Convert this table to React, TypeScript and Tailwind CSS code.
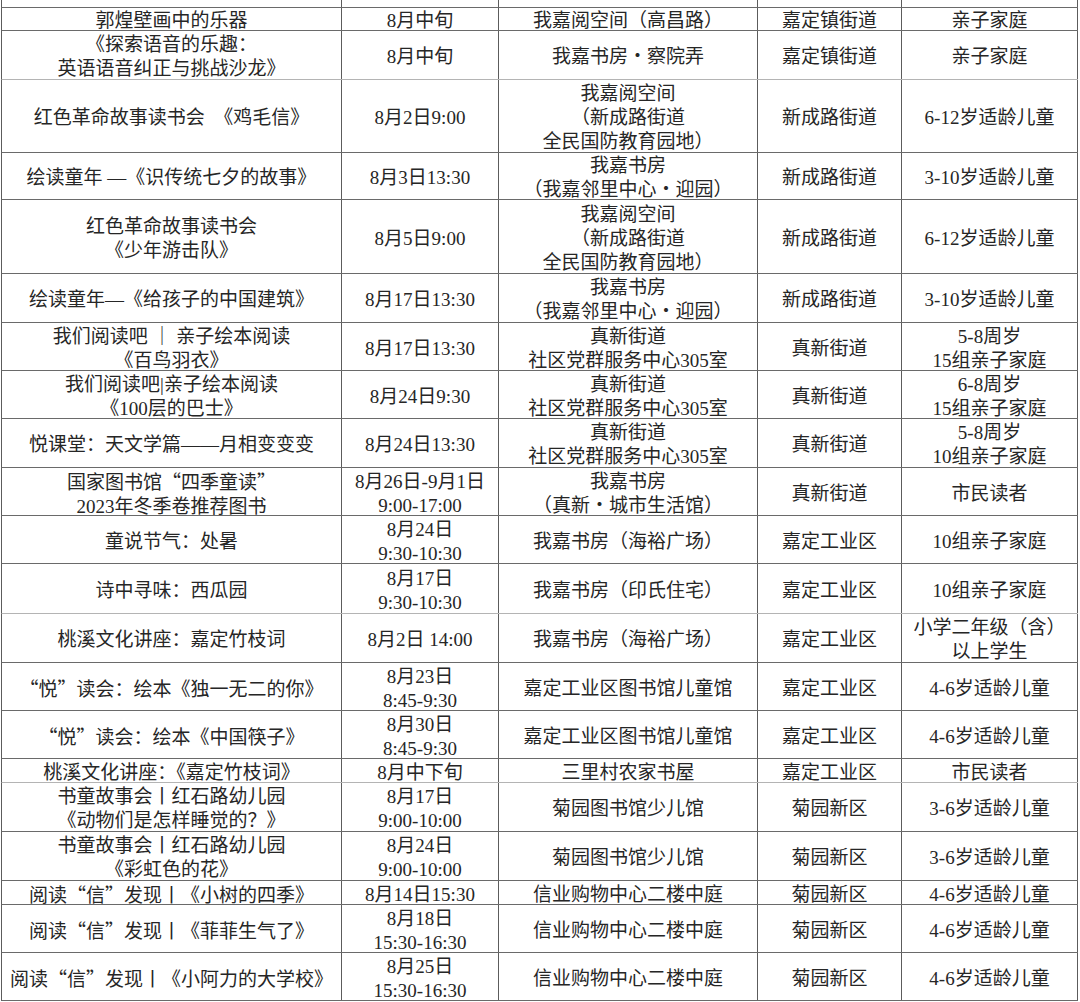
type Row = {
  h: number;
  cells: [string, string, string, string, string];
  light?: boolean;
};

const widths = ["w-[340px]", "w-[157px]", "w-[259px]", "w-[144px]", "w-[176px]"];

const rows: Row[] = [
  { h: 8, cells: ["", "", "", "", ""] },
  { h: 23, cells: ["郭煌壁画中的乐器", "8月中旬", "我嘉阅空间（高昌路）", "嘉定镇街道", "亲子家庭"] },
  {
    h: 49,
    light: true,
    cells: ["《探索语音的乐趣：\n英语语音纠正与挑战沙龙》", "8月中旬", "我嘉书房・察院弄", "嘉定镇街道", "亲子家庭"],
  },
  {
    h: 73,
    cells: ["红色革命故事读书会　《鸡毛信》", "8月2日9:00", "我嘉阅空间\n（新成路街道\n全民国防教育园地）", "新成路街道", "6-12岁适龄儿童"],
  },
  {
    h: 47,
    cells: ["绘读童年 —《识传统七夕的故事》", "8月3日13:30", "我嘉书房\n（我嘉邻里中心・迎园）", "新成路街道", "3-10岁适龄儿童"],
  },
  {
    h: 74,
    cells: ["红色革命故事读书会\n《少年游击队》", "8月5日9:00", "我嘉阅空间\n（新成路街道\n全民国防教育园地）", "新成路街道", "6-12岁适龄儿童"],
  },
  {
    h: 49,
    cells: ["绘读童年—《给孩子的中国建筑》", "8月17日13:30", "我嘉书房\n（我嘉邻里中心・迎园）", "新成路街道", "3-10岁适龄儿童"],
  },
  {
    h: 48,
    cells: ["我们阅读吧 ｜ 亲子绘本阅读\n《百鸟羽衣》", "8月17日13:30", "真新街道\n社区党群服务中心305室", "真新街道", "5-8周岁\n15组亲子家庭"],
  },
  {
    h: 48,
    cells: ["我们阅读吧|亲子绘本阅读\n《100层的巴士》", "8月24日9:30", "真新街道\n社区党群服务中心305室", "真新街道", "6-8周岁\n15组亲子家庭"],
  },
  {
    h: 49,
    cells: ["悦课堂：天文学篇——月相变变变", "8月24日13:30", "真新街道\n社区党群服务中心305室", "真新街道", "5-8周岁\n10组亲子家庭"],
  },
  {
    h: 48,
    cells: ["国家图书馆“四季童读”\n2023年冬季卷推荐图书", "8月26日-9月1日\n9:00-17:00", "我嘉书房\n（真新・城市生活馆）", "真新街道", "市民读者"],
  },
  { h: 48, cells: ["童说节气：处暑", "8月24日\n9:30-10:30", "我嘉书房（海裕广场）", "嘉定工业区", "10组亲子家庭"] },
  {
    h: 50,
    light: true,
    cells: ["诗中寻味：西瓜园", "8月17日\n9:30-10:30", "我嘉书房（印氏住宅）", "嘉定工业区", "10组亲子家庭"],
  },
  {
    h: 49,
    cells: ["桃溪文化讲座：嘉定竹枝词", "8月2日 14:00", "我嘉书房（海裕广场）", "嘉定工业区", "小学二年级（含）\n以上学生"],
  },
  {
    h: 48,
    cells: ["“悦”读会：绘本《独一无二的你》", "8月23日\n8:45-9:30", "嘉定工业区图书馆儿童馆", "嘉定工业区", "4-6岁适龄儿童"],
  },
  {
    h: 48,
    cells: ["“悦”读会：绘本《中国筷子》", "8月30日\n8:45-9:30", "嘉定工业区图书馆儿童馆", "嘉定工业区", "4-6岁适龄儿童"],
  },
  {
    h: 24,
    light: true,
    cells: ["桃溪文化讲座：《嘉定竹枝词》", "8月中下旬", "三里村农家书屋", "嘉定工业区", "市民读者"],
  },
  {
    h: 49,
    cells: ["书童故事会丨红石路幼儿园\n《动物们是怎样睡觉的？》", "8月17日\n9:00-10:00", "菊园图书馆少儿馆", "菊园新区", "3-6岁适龄儿童"],
  },
  {
    h: 49,
    cells: ["书童故事会丨红石路幼儿园\n《彩虹色的花》", "8月24日\n9:00-10:00", "菊园图书馆少儿馆", "菊园新区", "3-6岁适龄儿童"],
  },
  {
    h: 24,
    cells: ["阅读“信”发现丨《小树的四季》", "8月14日15:30", "信业购物中心二楼中庭", "菊园新区", "4-6岁适龄儿童"],
  },
  {
    h: 48,
    cells: ["阅读“信”发现丨《菲菲生气了》", "8月18日\n15:30-16:30", "信业购物中心二楼中庭", "菊园新区", "4-6岁适龄儿童"],
  },
  {
    h: 48,
    cells: ["阅读“信”发现丨《小阿力的大学校》", "8月25日\n15:30-16:30", "信业购物中心二楼中庭", "菊园新区", "4-6岁适龄儿童"],
  },
];

// curly quotes go to the CJK font so they come out full width
function CellText({ text }: { text: string }) {
  const parts = text.split(/([“”])/);
  return (
    <>
      {parts.map((p, i) =>
        p === "“" || p === "”" ? (
          <span key={i} className="font-['Noto_Sans_CJK_SC',sans-serif]">
            {p}
          </span>
        ) : (
          <span key={i}>{p}</span>
        ),
      )}
    </>
  );
}

export default function App() {
  return (
    <div className="min-h-[1002px] w-[1080px] bg-white">
      <div className="ml-[1px] w-[1077px] font-['Liberation_Serif','Noto_Sans_CJK_SC',serif] text-[19px] leading-[24px] text-[#262626]">
        {rows.map((row, ri) => (
          <div
            key={ri}
            className={`flex border-b border-l border-l-[#5c5c5c] ${
              row.light ? "border-b-[#b4b4b4]" : "border-b-[#6a6a6a]"
            }`}
            style={{ height: row.h }}
          >
            {row.cells.map((c, ci) => (
              <div
                key={ci}
                className={`${widths[ci]} flex shrink-0 items-center justify-center whitespace-pre border-r border-[#5c5c5c] text-center`}
              >
                <div className="pt-[4px]">
                  <CellText text={c} />
                </div>
              </div>
            ))}
          </div>
        ))}
      </div>
    </div>
  );
}
